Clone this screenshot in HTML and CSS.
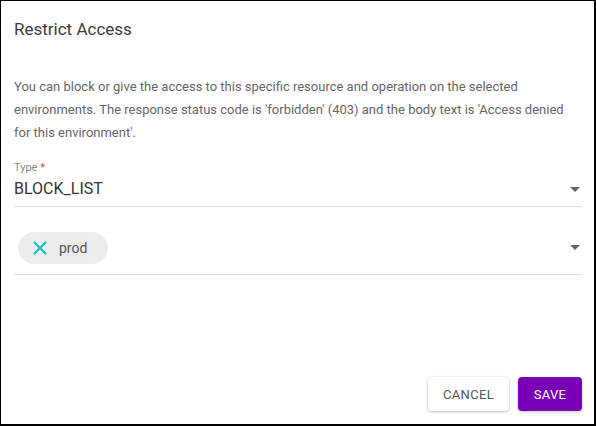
FILE: index.html
```html
<!DOCTYPE html>
<html>
<head>
<meta charset="utf-8">
<link rel="stylesheet" href="styles.css">
</head>
<body>
<div class="dialog">
  <h2 class="title">Restrict Access</h2>
  <p class="desc">You can block or give the access to this specific resource and operation on the selected environments. The response status code is 'forbidden' (403) and the body text is 'Access denied for this environment'.</p>
  <div class="field">
    <label class="label">Type <span class="req">*</span></label>
    <div class="select">
      <span class="value">BLOCK_LIST</span>
      <span class="arrow"></span>
    </div>
  </div>
  <div class="field chips-field">
    <div class="select">
      <span class="chip">
        <svg class="chip-x" width="16" height="16" viewBox="0 0 16 16"><path d="M2 2 L14 14 M14 2 L2 14" stroke="#13c3c7" stroke-width="2.2" fill="none"/></svg>
        <span class="chip-label">prod</span>
      </span>
      <span class="arrow"></span>
    </div>
  </div>
  <div class="spacer"></div>
  <div class="actions">
    <button class="btn btn-cancel">Cancel</button>
    <button class="btn btn-save">Save</button>
  </div>
</div>
</body>
</html>
```
FILE: styles.css
```css
html, body {
  margin: 0;
  padding: 0;
  background: #fff;
}
.dialog {
  box-sizing: border-box;
  width: 596px;
  height: 426px;
  border-style: solid;
  border-color: #000;
  border-width: 1px 2px 2px 1px;
  padding: 16px 12px 13px 13px;
  display: flex;
  flex-direction: column;
  font-family: Roboto, "Liberation Sans", sans-serif;
  background: #fff;
}
.title {
  margin: 0;
  font-size: 17px;
  line-height: 24px;
  font-weight: 400;
  color: #3c3c3c;
}
.desc {
  margin: 34px 0 0;
  font-size: 13px;
  line-height: 23px;
  color: #666;
}
.field {
  margin-top: 17px;
  border-bottom: 1px solid #ddd;
}
.label {
  display: block;
  font-size: 11px;
  line-height: 14px;
  color: #888;
}
.req {
  color: #f44336;
}
.select {
  display: flex;
  align-items: center;
  justify-content: space-between;
  position: relative;
}
.field .value {
  font-size: 16px;
  line-height: 24px;
  color: #333;
  padding: 2px 0 5px;
}
.arrow {
  width: 0;
  height: 0;
  border-left: 5px solid transparent;
  border-right: 5px solid transparent;
  border-top: 5px solid #666;
  margin-right: 2px;
}
.field .select .arrow {
  margin-top: -2px;
}
.chips-field {
  margin-top: 25px;
}
.chips-field .select {
  padding-bottom: 10px;
}
.chip {
  display: inline-flex;
  align-items: center;
  height: 32px;
  width: 90px;
  box-sizing: border-box;
  margin-left: 4px;
  padding-left: 14px;
  border-radius: 16px;
  background: #ececec;
}
.chip-x {
  display: block;
}
.chip-label {
  margin-left: 11px;
  font-size: 14px;
  color: #555;
}
.spacer {
  flex: 1;
}
.actions {
  display: flex;
  justify-content: flex-end;
  gap: 9px;
}
.btn {
  font-family: Roboto, "Liberation Sans", sans-serif;
  font-size: 13px;
  text-transform: uppercase;
  height: 34px;
  border: none;
  border-radius: 4px;
  letter-spacing: 0.3px;
}
.btn-cancel {
  width: 81px;
  background: #fff;
  color: #555;
  box-shadow: 0 1px 3px rgba(0,0,0,0.25), 0 0 1px rgba(0,0,0,0.12);
}
.btn-save {
  width: 64px;
  background: #7a00b8;
  color: #fff;
  box-shadow: 0 1px 3px rgba(0,0,0,0.25);
}
```
